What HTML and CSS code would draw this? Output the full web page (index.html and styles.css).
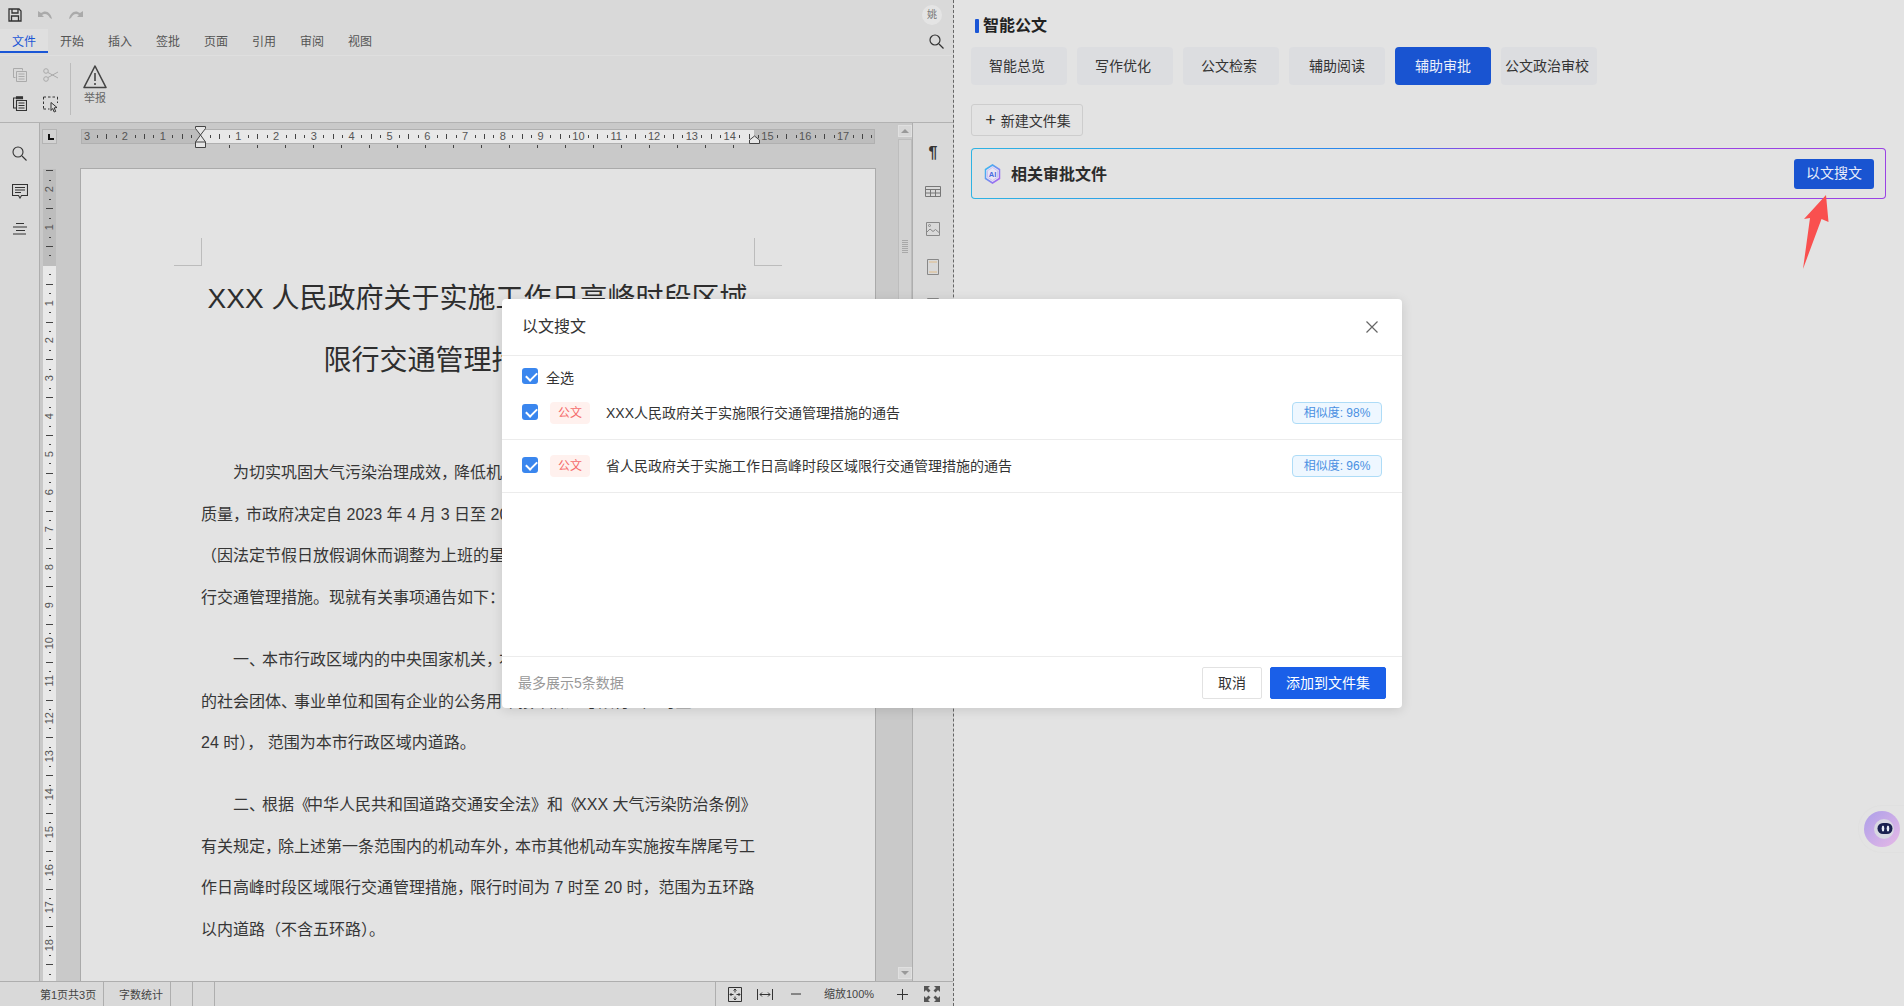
FILE: index.html
```html
<!DOCTYPE html>
<html lang="zh">
<head>
<meta charset="UTF-8">
<title>智能公文</title>
<link rel="stylesheet" href="styles.css">
</head>
<body>

<div class="word">

  <div class="qat">
    <svg width="14" height="14" viewBox="0 0 14 14" fill="none" stroke="#333" stroke-width="1.3"><path d="M1 1h10l2 2v10H1z"/><path d="M4 1v4h6V1M3.5 13V8h7v5"/></svg>
    <svg class="qat-undo" width="15" height="10" viewBox="0 0 15 10" fill="#aaa"><path d="M0 1v6h6L4 5c3-2 6-1 8 3l2 1C13 3 8-1 3 3z"/></svg>
    <svg class="qat-redo" width="15" height="10" viewBox="0 0 15 10" fill="#aaa"><path d="M15 1v6H9l2-2C8 3 5 4 3 8L1 9C2 3 7-1 12 3z"/></svg>
    <span class="avatar">姚</span>
  </div>

  <div class="menu">
    <a class="menu-tab on">文件</a>
    <a class="menu-tab">开始</a>
    <a class="menu-tab">插入</a>
    <a class="menu-tab">签批</a>
    <a class="menu-tab">页面</a>
    <a class="menu-tab">引用</a>
    <a class="menu-tab">审阅</a>
    <a class="menu-tab">视图</a>
    <svg class="menu-search" width="15" height="15" viewBox="0 0 15 15" fill="none" stroke="#333" stroke-width="1.2"><circle cx="6" cy="6" r="5"/><path d="M10 10l4.5 4.5"/></svg>
  </div>

  <div class="ribbon">
    <div class="ribbon-tools">
      <svg width="14" height="14" viewBox="0 0 14 14" fill="none" stroke="#aaa"><path d="M.5.5h9v2M.5.5v9h2"/><path d="M3.5 3.500h10v10h-10zM5.500 6h6M5.500 8.500h6M5.500 11h6"/></svg>
      <svg width="16" height="14" viewBox="0 0 16 14" fill="none" stroke="#aaa"><circle cx="3" cy="3" r="2.300"/><circle cx="3" cy="11" r="2.300"/><path d="M5 4.500l10 5.500M5 9.500L15 4"/></svg>
      <svg width="14" height="15" viewBox="0 0 14 15" fill="none" stroke="#333" stroke-width="1.100"><path d="M3 2H.5v10H3"/><path d="M3.500 4.500h10v10h-10zM5.500 7h6M5.500 9.500h6M5.500 12h6"/><path d="M3.500.8h6v2h-6z" fill="#333"/></svg>
      <svg width="16" height="17" viewBox="0 0 16 17" fill="none" stroke="#333"><path d="M.5 1h14M.5 13h6M.5 1v12M14.500 1v6" stroke-dasharray="2.500 2"/><path d="M8 6.500l6 5-2.800.4 1.500 3.500-1.500.6-1.500-3.500L8 14.500z" fill="#ddd"/></svg>
    </div>
    <div class="report">
      <svg width="24" height="24" viewBox="0 0 24 24" fill="none" stroke="#444" stroke-width="1.600" stroke-linejoin="round"><path d="M12 1L1 22.500h22z"/><path d="M12 8v8M12 18v2"/></svg>
      <span>举报</span>
    </div>
  </div>

  <div class="main">
    <div class="side-left">
      <svg width="15" height="15" viewBox="0 0 15 15" fill="none" stroke="#333" stroke-width="1.100"><circle cx="6" cy="6" r="5"/><path d="M10 10l4.500 4.500"/></svg>
      <svg width="16" height="15" viewBox="0 0 16 15" fill="none" stroke="#333" stroke-width="1.100"><path d="M.5.5h15v11H9.500L8 14l-1.500-2.500h-6z"/><path d="M3 3.500h10M3 6h10M3 8.500h6"/></svg>
      <svg class="side-outline" width="14" height="12" viewBox="0 0 14 12" fill="none" stroke="#333"><path d="M3 .5h8M0 4h14M3 7.500h9M0 11h13"/></svg>
    </div>

    <div class="work">
      <div class="rulers">
        <span class="ruler-corner"></span>
        <div class="vruler">
          <span><i>2</i></span><span><i>1</i></span><span></span><span><i>1</i></span><span><i>2</i></span><span><i>3</i></span><span><i>4</i></span><span><i>5</i></span><span><i>6</i></span><span><i>7</i></span><span><i>8</i></span><span><i>9</i></span><span><i>10</i></span><span><i>11</i></span><span><i>12</i></span><span><i>13</i></span><span><i>14</i></span><span><i>15</i></span><span><i>16</i></span><span><i>17</i></span><span><i>18</i></span><span></span>
        </div>
      </div>

      <div class="doc">
        <div class="hruler">
          <div class="hruler-cells">
            <span>3</span><span>2</span><span>1</span><span></span><span>1</span><span>2</span><span>3</span><span>4</span><span>5</span><span>6</span><span>7</span><span>8</span><span>9</span><span>10</span><span>11</span><span>12</span><span>13</span><span>14</span><span>15</span><span>16</span><span>17</span><span></span>
          </div>
          <svg class="marker-left" width="11" height="22" viewBox="0 0 11 22" fill="#e6e6e6" stroke="#444"><path d="M.5.5h10v2L5.500 9 .5 2.500z"/><path d="M5.500 9l5 7v5.500H.5V16zM.5 16h10"/></svg>
          <svg class="marker-right" width="11" height="9" viewBox="0 0 11 9" fill="#e6e6e6" stroke="#444"><path d="M.5 8.500V5l5-4 5 4v3.500z"/></svg>
        </div>
        <div class="tab-stops"></div>

        <div class="page">
          <i class="crop crop-left"></i>
          <i class="crop crop-right"></i>
          <h1>XXX 人民政府关于实施工作日高峰时段区域<br>限行交通管理措施的通告</h1>
          <p><b></b>为切实巩固大气污染治理成效<u>，</u>降低机动车污染物排放<u>，</u>改善空气<br>质量<u>，</u>市政府决定自 2023 年 4 月 3 日至 2024 年 4 月 7 日工作日<br>（因法定节假日放假调休而调整为上班的星期六、星期日除外）采取限<br>行交通管理措施。现就有关事项通告如下：</p>
          <p><b></b>一<u>、</u>本市行政区域内的中央国家机关<u>，</u>本市各级党政机关<u>，</u>中央和本<br>的社会团体<u>、</u>事业单位和国有企业的公务用车按车牌尾号限行（0 时至<br>24 时）， 范围为本市行政区域内道路。</p>
          <p><b></b>二<u>、</u>根据<u>《</u>中华人民共和国道路交通安全法》和<u>《</u>XXX 大气污染防治条例》<br>有关规定<u>，</u>除上述第一条范围内的机动车外<u>，</u>本市其他机动车实施按车牌尾号工<br>作日高峰时段区域限行交通管理措施<u>，</u>限行时间为 7 时至 20 时，范围为五环路<br>以内道路（不含五环路）。</p>
        </div>
      </div>

      <div class="scroll">
        <span class="scroll-btn"><i class="arrow-up"></i></span>
        <div class="scroll-thumb"><i></i></div>
        <span class="scroll-btn scroll-down"><i class="arrow-down"></i></span>
      </div>
    </div>

    <div class="side-right">
      <span class="pilcrow">¶</span>
      <svg width="16" height="11" viewBox="0 0 16 11" fill="none" stroke="#777"><path d="M.5.5h15v10H.5zM.5 3.500h15M.5 7h15M5.500 3.500v7M10.500 3.500v7"/></svg>
      <svg width="14" height="14" viewBox="0 0 14 14" fill="none" stroke="#888"><path d="M.5.5h13v13H.5z"/><circle cx="3.500" cy="3.500" r="1"/><path d="M1 10l3-3 3 2.500 2.500-2 3.500 3"/></svg>
      <svg class="side-page" width="12" height="16" viewBox="0 0 12 16" fill="none" stroke="#888"><path d="M.5.500h11v15H.5z"/><path d="M2.500 3h7M2.500 13h7" stroke="#e8a13c" stroke-dasharray="1 1"/></svg>
      <svg class="side-page" width="12" height="16" viewBox="0 0 12 16" fill="none" stroke="#888"><path d="M.5.500h11v15H.5z"/></svg>
    </div>
  </div>

  <div class="status">
    <span class="status-cell status-page">第1页共3页</span>
    <span class="status-cell status-count">字数统计</span>
    <span class="status-cell status-blank"></span>
    <span class="status-cell status-blank"></span>
    <div class="status-zoom">
      <svg width="14" height="15" viewBox="0 0 14 15" fill="none" stroke="#333"><path d="M.5.500h13v14H.5z"/><path d="M7 2v3.500M7 9.500V13M2 7.500h3.500M8.500 7.500H12M5.500 3.500L7 2l1.500 1.500M5.500 11.500L7 13l1.500-1.500M3.500 6L2 7.500 3.500 9M10.500 6L12 7.500 10.500 9"/></svg>
      <svg class="z-width" width="16" height="11" viewBox="0 0 16 11" fill="none" stroke="#333"><path d="M.5 0v11M15.500 0v11M3 5.500h10M5 3.500l-2 2 2 2M11 3.500l2 2-2 2"/></svg>
      <svg class="z-minus" width="10" height="2" viewBox="0 0 10 2" stroke="#333"><path d="M0 1h10"/></svg>
      <span class="z-label">缩放100%</span>
      <svg class="z-plus" width="11" height="11" viewBox="0 0 11 11" stroke="#333"><path d="M0 5.500h11M5.500 0v11"/></svg>
      <svg class="z-full" width="16" height="16" viewBox="0 0 16 16" fill="#555"><path d="M0 0h6L4 2l2.500 2.500-2 2L2 4 0 6zM16 0v6l-2-2-2.500 2.500-2-2L12 2l-2-2zM0 16v-6l2 2 2.500-2.500 2 2L4 14l2 2zM16 16h-6l2-2-2.500-2.500 2-2L14 12l2-2z"/></svg>
    </div>
  </div>
</div>

<div class="panel">
  <div class="panel-title"><i></i>智能公文</div>
  <div class="panel-tabs">
    <a class="panel-tab">智能总览</a>
    <a class="panel-tab">写作优化</a>
    <a class="panel-tab">公文检索</a>
    <a class="panel-tab">辅助阅读</a>
    <a class="panel-tab on">辅助审批</a>
    <a class="panel-tab">公文政治审校</a>
  </div>
  <a class="new-set"><em>+</em>新建文件集</a>
  <div class="ai-card">
    <svg width="19" height="20" viewBox="0 0 19 20" fill="none">
      <defs><linearGradient id="hex" x1="0" y1="0" x2="1" y2="1"><stop offset="0" stop-color="#2fc0f0"/><stop offset="1" stop-color="#b45cf0"/></linearGradient></defs>
      <path d="M9.500 1l7 4.500v9l-7 4.500-7-4.500v-9z" stroke="url(#hex)" stroke-width="1.500" fill="#e9e6f4"/>
      <path d="M9.500 3.500l5 3.200v6.600l-5 3.200-5-3.200V6.700z" stroke="#c9b6f0" stroke-width=".8"/>
      <text x="9.500" y="13" text-anchor="middle" font-size="7.500" font-weight="700" font-family="Liberation Sans" fill="#4a6ae0">AI</text>
    </svg>
    <span class="ai-card-title">相关审批文件</span>
    <a class="search-btn">以文搜文</a>
  </div>
</div>

<!-- annotation drawn on top of the screenshot -->
<svg class="red-arrow" width="30" height="76" viewBox="0 0 30 76" fill="#f9504f"><path d="M26 0l2.500 27-7-3L3 74l7-51-6 1z"/></svg>

<div class="robot">
  <svg width="38" height="38" viewBox="0 0 38 38">
    <defs><linearGradient id="halo" x1="0" y1="0" x2="1" y2="1"><stop offset="0" stop-color="#ad9fe9"/><stop offset="1" stop-color="#e6b9e6"/></linearGradient></defs>
    <circle cx="19" cy="19" r="18" fill="url(#halo)"/>
    <circle cx="21" cy="19" r="10" fill="#d8d8e2"/>
    <rect x="14.500" y="13" width="15" height="11" rx="5.500" fill="#1a2150"/>
    <ellipse cx="20" cy="18.500" rx="1.300" ry="3" fill="#e8eef8"/>
    <ellipse cx="25" cy="18.500" rx="1.300" ry="3" fill="#e8eef8"/>
  </svg>
</div>

<div class="dialog">
  <div class="dialog-head">
    <span>以文搜文</span>
    <svg width="12" height="12" viewBox="0 0 12 12" stroke="#666" stroke-width="1.200"><path d="M.5.500l11 11M11.500.500l-11 11"/></svg>
  </div>
  <div class="dialog-body">
    <label class="select-all"><i class="check"></i><span>全选</span></label>
    <div class="result">
      <i class="check"></i>
      <span class="tag">公文</span>
      <span class="result-name">XXX人民政府关于实施限行交通管理措施的通告</span>
      <span class="score">相似度: 98%</span>
    </div>
    <div class="result">
      <i class="check"></i>
      <span class="tag">公文</span>
      <span class="result-name">省人民政府关于实施工作日高峰时段区域限行交通管理措施的通告</span>
      <span class="score">相似度: 96%</span>
    </div>
  </div>
  <div class="dialog-foot">
    <span class="foot-note">最多展示5条数据</span>
    <a class="btn">取消</a>
    <a class="btn btn-primary">添加到文件集</a>
  </div>
</div>

</body>
</html>
```

FILE: styles.css
```css
* {
margin: 0;
padding: 0;
box-sizing: border-box;
}

html,body{
height: 100%;
overflow: hidden;
}

body{
display: flex;
background-color: #e3e3e3;
font-family: "Liberation Sans", "Noto Sans CJK SC", sans-serif;
color: #333;
font-size: 14px;
}

i,em{
font-style: normal;
}

svg{
display: block;
flex: none;
}

/* left pane: the word processor */
.word{
width: 954px;
flex: none;
height: 100%;
display: flex;
flex-direction: column;
background-color: #d9d9d9;
border-right: 1px dashed #666;
}

.qat{
height: 29px;
flex: none;
display: flex;
align-items: center;
padding-left: 8px;
}

.qat-undo{
margin-left: 16px;
}

.qat-redo{
margin-left: 15px;
}

.avatar{
margin-left: auto;
margin-right: 11px;
width: 20px;
height: 20px;
border-radius: 50%;
background-color: #e4e4e4;
color: #777;
font-size: 10px;
line-height: 20px;
text-align: center;
}

.menu{
height: 26px;
flex: none;
display: flex;
align-items: flex-start;
}

.menu-tab{
width: 48px;
height: 24px;
line-height: 26px;
text-align: center;
font-size: 12px;
color: #555;
}

.menu-tab.on{
color: #1a56d6;
background-color: #dfdfdf;
border-bottom: 2px solid #1a56d6;
}

.menu-search{
margin-left: auto;
margin-right: 9px;
margin-top: 5px;
}

.ribbon{
height: 68px;
flex: none;
display: flex;
border-top: 1px solid #dfdfdf;
border-bottom: 1px solid #b2b2b2;
padding-left: 13px;
}

.ribbon-tools{
width: 58px;
height: 52px;
margin-top: 7px;
padding-top: 5px;
display: grid;
grid-template-columns: 30px 16px;
grid-template-rows: 28px 17px;
border-right: 1px solid #bcbcbc;
}

.report{
margin-left: 11px;
margin-top: 9px;
width: 26px;
display: flex;
flex-direction: column;
align-items: center;
font-size: 11px;
line-height: 18px;
color: #666;
}

.main{
flex: 1;
min-height: 0;
display: flex;
}

.side-left{
width: 40px;
flex: none;
display: flex;
flex-direction: column;
align-items: center;
padding-top: 23px;
gap: 23px;
border-right: 1px solid #aeaeae;
}

.side-outline{
margin-top: 1px;
}

.work{
flex: 1;
min-width: 0;
display: flex;
padding-top: 6px;
padding-left: 2px;
background-color: #c9c9c9;
overflow: hidden;
}

.rulers{
width: 38px;
flex: none;
display: flex;
flex-direction: column;
}

.ruler-corner{
width: 15px;
height: 15px;
flex: none;
border: 1px solid #b4b4b4;
background: linear-gradient(#111,#111) 5px 4px / 2px 6px no-repeat,
 linear-gradient(#111,#111) 5px 8px / 6px 2px no-repeat,
 #d2d2d2;
}

.vruler{
width: 13px;
flex: 1;
margin-top: 25px;
margin-left: 1px;
padding-top: 1.4px;
overflow: hidden;
font-size: 11px;
color: #555;
background: linear-gradient(#bdbdbd 97px, #e8e8e8 97px);
}

.vruler span{
height: 37.8px;
display: flex;
align-items: center;
justify-content: center;
background: linear-gradient(#444,#444) center 0 / 7px 1px no-repeat,
 linear-gradient(#444,#444) center 9.5px / 2px 1px no-repeat,
 linear-gradient(#444,#444) center 28.5px / 2px 1px no-repeat;
}

.vruler i{
writing-mode: vertical-rl;
transform: rotate(180deg);
line-height: 1;
}

.doc{
width: 796px;
flex: none;
display: flex;
flex-direction: column;
}

.hruler{
position: relative;
width: 794px;
height: 15px;
flex: none;
margin-left: 1px;
border: 1px solid #b0b0b0;
background: linear-gradient(90deg, #bdbdbd 118.5px, #e8e8e8 118.5px, #e8e8e8 672px, #bdbdbd 672px);
}

.hruler-cells{
height: 100%;
display: flex;
overflow: hidden;
font-size: 11px;
line-height: 13px;
color: #555;
}

.hruler-cells span{
width: 37.8px;
flex: none;
text-align: center;
position: relative;
left: -13.8px;
background: linear-gradient(#444,#444) 0 center / 1px 5px no-repeat,
 linear-gradient(#444,#444) 9.5px center / 1px 3px no-repeat,
 linear-gradient(#444,#444) 28.5px center / 1px 3px no-repeat;
}

.marker-left{
position: absolute;
left: 113px;
top: -4px;
}

.marker-right{
position: absolute;
left: 667px;
top: 5px;
}

.tab-stops{
width: 505px;
height: 3px;
flex: none;
margin-left: 149px;
margin-top: 1px;
background: repeating-linear-gradient(90deg, #444 0, #444 1px, transparent 1px, transparent 28px);
}

.page{
position: relative;
flex: 1;
min-height: 0;
margin-top: 20px;
padding: 0 0 0 120px;
background-color: #e3e3e3;
border: 1px solid #aaa;
border-bottom: 0;
overflow: hidden;
color: #363636;
white-space: nowrap;
}

.page h1{
width: 553px;
margin-top: 99px;
margin-bottom: 60px;
text-align: center;
font-size: 28px;
font-weight: 400;
line-height: 62px;
color: #2e2e2e;
}

.page p{
font-size: 16px;
line-height: 41.7px;
margin-bottom: 20px;
}

.page b{
display: inline-block;
width: 32px;
}

/* word squeezes the punctuation a little */
.page u{
text-decoration: none;
letter-spacing: -3px;
}

/* corner marks of the text area */
.crop{
position: absolute;
top: 69px;
width: 28px;
height: 28px;
}

.crop-left{
left: 93px;
border-right: 1px solid #bcbcbc;
border-bottom: 1px solid #bcbcbc;
}

.crop-right{
left: 673px;
border-left: 1px solid #bcbcbc;
border-bottom: 1px solid #bcbcbc;
}

.scroll{
width: 14px;
flex: none;
margin-left: 22px;
display: flex;
flex-direction: column;
margin-top: -4px;
margin-bottom: 2px;
position: relative;
}

.scroll-btn{
height: 12px;
flex: none;
display: flex;
align-items: center;
justify-content: center;
background-color: #d7d7d7;
border: 1px solid #e0e0e0;
}

.scroll-down{
position: absolute;
bottom: 0;
left: 0;
width: 14px;
}

.arrow-up{
border-left: 4px solid transparent;
border-right: 4px solid transparent;
border-bottom: 4px solid #999;
}

.arrow-down{
border-left: 4px solid transparent;
border-right: 4px solid transparent;
border-top: 4px solid #999;
}

.scroll-thumb{
height: 165px;
flex: none;
margin-top: 2px;
background-color: #d2d2d2;
border: 1px solid #bdbdbd;
display: flex;
align-items: flex-end;
justify-content: center;
padding-bottom: 50px;
}

.scroll-thumb i{
width: 6px;
height: 13px;
background: repeating-linear-gradient(#a8a8a8 0, #a8a8a8 1px, transparent 1px, transparent 2px);
}

.side-right{
width: 41px;
flex: none;
display: flex;
flex-direction: column;
align-items: center;
border-left: 1px solid #aeaeae;
padding-top: 23px;
}

.pilcrow{
height: 14px;
font-size: 16px;
font-weight: 700;
line-height: 14px;
color: #333;
margin-bottom: 26px;
}

.side-right svg + svg{
margin-top: 25px;
}

.side-right .side-page{
margin-top: 23px;
}

.status{
height: 25px;
flex: none;
display: flex;
align-items: stretch;
border-top: 1px solid #aeaeae;
font-size: 11px;
line-height: 26px;
color: #444;
}

.status-cell{
border-right: 1px solid #aeaeae;
}

.status-page{
width: 104px;
padding-left: 40px;
}

.status-count{
width: 67px;
padding-left: 15px;
}

.status-blank{
width: 22px;
}

.status-zoom{
margin-left: auto;
width: 238px;
display: flex;
align-items: center;
padding-left: 12px;
border-left: 1px solid #aeaeae;
}

.z-width{
margin-left: 15px;
}

.z-minus{
margin-left: 18px;
}

.z-label{
margin-left: 23px;
width: 50px;
white-space: nowrap;
}

.z-plus{
margin-left: 23px;
}

.z-full{
margin-left: 16px;
}

/* right pane: assistant panel */
.panel{
flex: 1;
min-width: 0;
padding: 10px 18px 0 17px;
}

.panel-title{
height: 28px;
display: flex;
align-items: center;
gap: 4px;
margin-bottom: 9px;
padding-left: 4px;
font-size: 16px;
font-weight: 700;
color: #222;
}

.panel-title i{
width: 4px;
height: 14px;
margin-top: 4px;
border-radius: 1px;
background-color: #1a56d6;
}

.panel-tabs{
display: flex;
gap: 10px;
margin-bottom: 19px;
}

.panel-tab{
width: 96px;
height: 38px;
line-height: 39px;
text-align: center;
border-radius: 4px;
background-color: #dcdde0;
white-space: nowrap;
}

.panel-tab:nth-child(-n+3),
.panel-tab:nth-child(6){
padding-right: 4px;
}

.panel-tab.on{
background-color: #1954d1;
color: #e9eefa;
}

.new-set{
display: flex;
align-items: center;
justify-content: center;
width: 112px;
height: 32px;
margin-bottom: 12px;
padding-left: 2px;
border: 1px solid #cdcdcd;
border-radius: 3px;
color: #333;
}

.new-set em{
font-size: 18px;
line-height: 1;
margin-right: 5px;
font-weight: 300;
}

.ai-card{
height: 51px;
display: flex;
align-items: center;
padding: 0 11px 0 11px;
border: 1px solid transparent;
border-radius: 4px;
background: linear-gradient(#e3e3e3,#e3e3e3) padding-box,
 linear-gradient(90deg, #2fb3e3, #2a80ee 48%, #9a42e4 55%, #9a42e4) border-box;
}

.ai-card-title{
margin-left: 9px;
margin-bottom: 2px;
font-size: 16px;
font-weight: 700;
color: #2b2b2b;
}

.search-btn{
margin-left: auto;
width: 80px;
height: 30px;
line-height: 29px;
text-align: center;
border-radius: 3px;
background-color: #1954d1;
color: #e9eefa;
}

.red-arrow{
position: absolute;
left: 1800px;
top: 195px;
}

.robot{
position: absolute;
right: 0;
top: 805px;
width: 46px;
height: 48px;
padding: 4px 0 0 4px;
border: 1px solid #e0e0e0;
border-right: 0;
border-radius: 24px 0 0 24px;
}

/* dialog */
.dialog{
position: absolute;
left: 502px;
top: 299px;
width: 900px;
height: 409px;
display: flex;
flex-direction: column;
background-color: #fff;
border-radius: 4px;
box-shadow: 0 2px 12px rgba(0,0,0,.12);
}

.dialog-head{
height: 57px;
flex: none;
display: flex;
align-items: center;
justify-content: space-between;
padding: 0 24px 0 20px;
border-bottom: 1px solid #ececec;
font-size: 16px;
}

.dialog-head span{
margin-bottom: 4px;
}

.dialog-body{
flex: 1;
min-height: 0;
}

.check{
position: relative;
width: 16px;
height: 16px;
flex: none;
border-radius: 3px;
background-color: #3a86ee;
}

.check::after{
content: "";
position: absolute;
left: 3.5px;
top: 3.5px;
width: 9px;
height: 5px;
border-left: 2px solid #fff;
border-bottom: 2px solid #fff;
transform: rotate(-45deg);
}

.select-all{
height: 31px;
display: flex;
align-items: flex-start;
gap: 8px;
padding: 12px 20px 0;
line-height: 20px;
color: #333;
}

.result{
height: 53px;
display: flex;
align-items: center;
padding: 0 20px;
border-bottom: 1px solid #ececec;
}

.result .check{
margin-top: -2px;
}

.tag{
width: 40px;
height: 22px;
margin-left: 12px;
line-height: 23px;
text-align: center;
font-size: 12px;
border-radius: 4px;
background-color: #fff1ee;
color: #f56c6c;
}

.result-name{
margin-left: 16px;
margin-bottom: 2px;
color: #333;
}

.score{
margin-left: auto;
width: 90px;
height: 22px;
line-height: 21px;
text-align: center;
font-size: 12px;
border: 1px solid #aedcf7;
border-radius: 4px;
background-color: #eef7ff;
color: #4a90e2;
}

.dialog-foot{
height: 52px;
flex: none;
display: flex;
align-items: center;
padding: 0 16px;
gap: 8px;
border-top: 1px solid #ececec;
}

.foot-note{
margin-right: auto;
margin-bottom: 2px;
color: #999;
}

.btn{
width: 60px;
height: 32px;
line-height: 30px;
text-align: center;
border: 1px solid #e2e2e2;
border-radius: 2px;
color: #333;
}

.btn-primary{
width: 116px;
background-color: #1a5fe8;
border-color: #1a5fe8;
color: #fff;
}
```
